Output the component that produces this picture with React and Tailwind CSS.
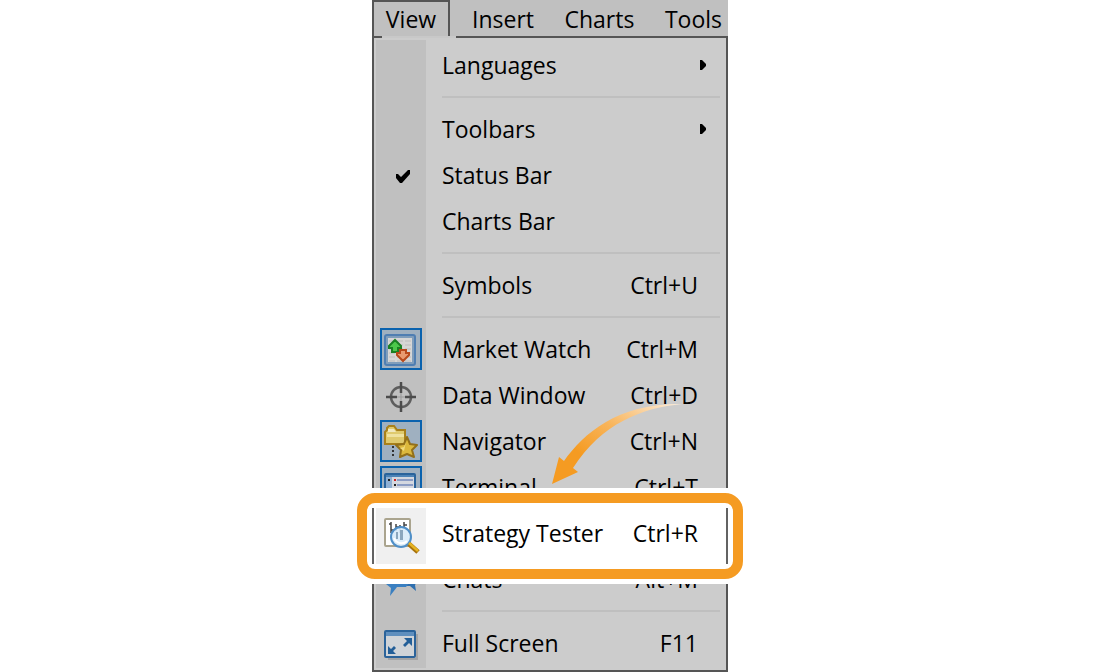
import clsx from "clsx";

const MarketWatchIcon = () => (
  <svg viewBox="0 0 34 34" className="w-[34px] h-[34px]" aria-hidden="true">
    <rect x="1" y="3" width="30" height="30" rx="2" fill="#7f9dbb" stroke="#4f7eb2" strokeWidth="2" />
    <rect x="4" y="6" width="24" height="24" fill="#d6d6d6" />
    <path
      d="M5 9h23M5 13h23M5 17h23M5 21h23M5 25h23M5 29h23"
      stroke="#bcbcbc"
      strokeWidth="1"
      strokeDasharray="6 2"
    />
    <path d="M11 8l6 6v2h-3v4H8v-4H5v-2z" fill="#4cc84c" stroke="#1a8024" strokeWidth="2" />
    <path d="M19 29l-6-6v-2h3v-3h6v3h3v2z" fill="#e89a70" stroke="#b84a1c" strokeWidth="2" />
  </svg>
);

const DataWindowIcon = () => (
  <svg viewBox="0 0 34 34" className="w-[34px] h-[34px]" aria-hidden="true">
    <circle cx="17" cy="19" r="10" fill="none" stroke="#5e5e5e" strokeWidth="2.500" />
    <path d="M17 4v11M17 23v11M2 19h11M21 19h11" stroke="#4c4c4c" strokeWidth="2.500" />
    <path d="M17 15v8M13 19h8" stroke="#999" strokeWidth="1" />
  </svg>
);

const NavigatorIcon = () => (
  <svg viewBox="0 0 34 34" className="w-[34px] h-[34px]" aria-hidden="true">
    <path d="M1 20V8l2-2V4l2-2h5l3 4h8v14z" fill="#dfca6e" stroke="#a8801a" strokeWidth="2" />
    <path d="M4 5h6l2 3H4z" fill="#f0e8c0" />
    <path d="M3 10h17v3H3z" fill="#efe2a0" />
    <path d="M9 22v12" stroke="#333" strokeWidth="2" strokeDasharray="2 2" />
    <path
      d="M23 13l3 7 7 1-5 5 2 7-7-3-7 3 1-7-5-5 8-1z"
      fill="#dcb83c"
      stroke="#93701a"
      strokeWidth="2"
      strokeLinejoin="round"
    />
    <path d="M22 18l-2 5-4 1 4 3z" fill="#f0dc80" />
  </svg>
);

const TerminalIcon = () => (
  <svg viewBox="0 0 34 34" className="w-[34px] h-[34px]" aria-hidden="true">
    <rect x="1" y="4" width="30" height="26" rx="1" fill="#d4d8e0" stroke="#2a639b" strokeWidth="2" />
    <path d="M2 5h28v2H2z" fill="#4b82b6" />
    <path d="M2 7h6v22H2z" fill="#8fb0d4" />
    <path d="M13 10h16M13 15h16M13 20h16M13 25h16" stroke="#8a9cc4" strokeWidth="2" />
    <path d="M4 9h2v2H4zM10 14h2v2h-2zM10 19h2v2h-2z" fill="#222" />
    <path d="M10 9h2v2h-2z" fill="#d02020" />
  </svg>
);

const StrategyTesterIcon = () => (
  <svg viewBox="0 0 34 34" className="w-[34px] h-[34px] overflow-visible" aria-hidden="true">
    <rect x="1" y="3" width="25" height="27" rx="1" fill="#fff" stroke="#aaa48e" strokeWidth="2" />
    <path d="M7 6v11M5 8h2M7 14h3M12 8v7M12 11h3M16 9v8M20 6v5M20 9h3" stroke="#444" strokeWidth="1.500" />
    <circle cx="17" cy="21" r="10" fill="#d8ebfa" fillOpacity="0.9" stroke="#4f8fc8" strokeWidth="2" />
    <path d="M12 16h2v7h-2zM16 14h3v10h-3z" fill="#8aa6bd" />
    <path d="M10 22a8 8 0 0 0 13 3" fill="none" stroke="#fff" strokeWidth="2" />
    <path d="M25 28l9 8" stroke="#a8720c" strokeWidth="5" />
    <path d="M25 27l9 8" stroke="#e6b422" strokeWidth="2.500" />
  </svg>
);

const ChatsIcon = () => (
  <svg viewBox="0 0 34 34" className="w-[34px] h-[34px] overflow-visible" aria-hidden="true">
    <path d="M20 8h10l3 4v8l-2 3 1 6-6-5h-6z" fill="#2f6fae" />
    <path d="M4 4h18l3 4v13l-3 4H13l-7 9 1-8-5-4V8z" fill="#3a7fc0" />
  </svg>
);

const FullScreenIcon = () => (
  <svg viewBox="0 0 34 34" className="w-[34px] h-[34px]" aria-hidden="true">
    <path d="M33 8v25H4" fill="none" stroke="#a4a4a4" strokeWidth="2" />
    <rect x="1" y="5" width="30" height="26" rx="1" fill="#d0d4d8" stroke="#2b639a" strokeWidth="2" />
    <path d="M2 6h28v4H2z" fill="#5f8fbe" />
    <path d="M20 12h8v8l-3-3-4 4-2-2 4-4z" fill="#235f98" />
    <path d="M4 20v8h8l-3-3 3-3-2-2-3 3z" fill="#235f98" />
  </svg>
);

const CheckIcon = () => (
  <svg viewBox="0 0 16 20" className="w-4 h-5 ml-1" aria-hidden="true">
    <path d="M1 9h2l3 3 7-7h2v4l-8 9H5l-4-5z" fill="#000" />
  </svg>
);

const menuBar = ["Insert", "Charts", "Tools"];

const groups = [
  [{ label: "Languages", submenu: true }],
  [
    { label: "Toolbars", submenu: true },
    { label: "Status Bar", icon: CheckIcon },
    { label: "Charts Bar" },
  ],
  [{ label: "Symbols", shortcut: "Ctrl+U" }],
  [
    { label: "Market Watch", shortcut: "Ctrl+M", icon: MarketWatchIcon, active: true },
    { label: "Data Window", shortcut: "Ctrl+D", icon: DataWindowIcon },
    { label: "Navigator", shortcut: "Ctrl+N", icon: NavigatorIcon, active: true },
    { label: "Terminal", shortcut: "Ctrl+T", icon: TerminalIcon, active: true },
    { label: "Strategy Tester", shortcut: "Ctrl+R", icon: StrategyTesterIcon, highlight: true },
    { label: "Chats", shortcut: "Alt+M", icon: ChatsIcon },
  ],
  [{ label: "Full Screen", shortcut: "F11", icon: FullScreenIcon }],
];

const MenuItem = ({ label, shortcut, icon: Icon, active, submenu, highlight }) => (
  <li className={clsx("relative", highlight && "z-10")}>
    {/* Callout frame behind the highlighted row */}
    {highlight && (
      <div className="absolute -left-[17px] -right-[17px] -top-[22px] -bottom-7 bg-white py-[5px]">
        <div className="h-full border-[10px] border-[#f59b22] rounded-[18px] p-[5px]">
          <div className="h-full border-x-2 border-[#636363] pl-[2px]">
            <div className="h-full w-[50px] bg-[#f0f0f0]" />
          </div>
        </div>
      </div>
    )}
    <button
      type="button"
      className="relative flex items-center w-full h-[46px] pl-[2px] pr-7 text-left"
    >
      <span className="flex justify-center w-[50px] shrink-0">
        <span
          className={clsx(
            "flex items-center justify-center w-[42px] h-[42px]",
            active && "border-2 border-[#0a62ae] bg-[#9fb0c0]"
          )}
        >
          {Icon && <Icon />}
        </span>
      </span>
      <span className="flex-1 ml-4">{label}</span>
      {shortcut && <span>{shortcut}</span>}
      {submenu && (
        <svg viewBox="0 0 6 10" className="w-[6px] h-[10px] -mr-2" aria-hidden="true">
          <path d="M0 0h2l4 4v2l-4 4H0z" fill="#000" />
        </svg>
      )}
    </button>
  </li>
);

const PointerArrow = () => (
  <svg
    viewBox="0 0 132 82"
    className="absolute z-20 left-[180px] top-[403px] w-[132px] h-[82px] pointer-events-none"
    aria-hidden="true"
  >
    <defs>
      <linearGradient id="swoosh" x1="0" y1="1" x2="1" y2="0">
        <stop offset="0.3" stopColor="#f59b22" />
        <stop offset="0.6" stopColor="#f8b55c" />
        <stop offset="1" stopColor="#fdeedd" />
      </linearGradient>
    </defs>
    <path
      d="M0 81L7 54l5 4C32 30 66 0 130 1C90 5 50 20 21 65l5 4z"
      fill="url(#swoosh)"
    />
  </svg>
);

export default function App() {
  return (
    <div className="flex justify-center min-h-screen bg-white overflow-hidden font-['Open_Sans','Noto_Sans',sans-serif] text-[23px] leading-7 text-black">
      <div className="relative w-full max-w-[356px]">
        {/* Menu bar */}
        <nav className="flex h-9 bg-[#c0c0c0] whitespace-nowrap">
          <button
            type="button"
            className="w-[78px] shrink-0 border-2 border-b-0 border-[#555] text-center"
          >
            View
          </button>
          <div className="flex flex-1 justify-between pl-[22px] pr-[6px] pt-[2px]">
            {menuBar.map((name) => (
              <button key={name} type="button">
                {name}
              </button>
            ))}
          </div>
        </nav>

        {/* Dropdown */}
        <div className="flex h-[2px]">
          <span className="w-[10px] bg-[#555]" />
          <span className="w-[74px] bg-[#c8c8c8]" />
          <span className="flex-1 bg-[#555]" />
        </div>
        <div className="border-2 border-t-0 border-[#555] bg-[#ccc] py-[2px]">
          <div className="py-[2px] bg-[linear-gradient(#c0c0c0,#c0c0c0)] bg-[length:50px_100%] bg-[position:2px_0] bg-no-repeat">
            {groups.map((items, i) => (
              <div key={items[0].label}>
                {i > 0 && (
                  <hr className="my-2 ml-[68px] mr-[6px] border-t-2 border-[#bfbfbf]" />
                )}
                <ul>
                  {items.map((item) => (
                    <MenuItem key={item.label} {...item} />
                  ))}
                </ul>
              </div>
            ))}
          </div>
        </div>
        <PointerArrow />
      </div>
    </div>
  );
}
